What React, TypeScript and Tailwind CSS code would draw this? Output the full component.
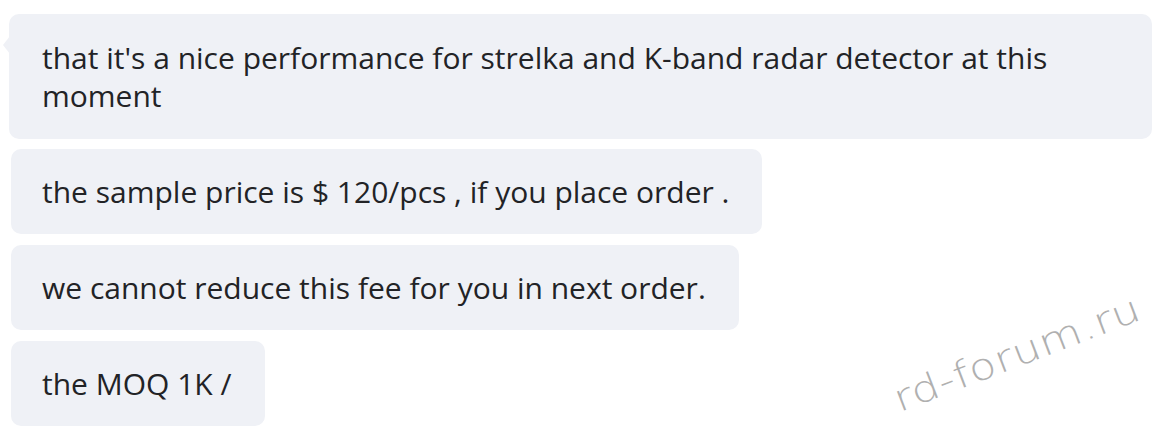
export default function App() {
  const msgs = [
    "the sample price is $ 120/pcs , if you place order .",
    "we cannot reduce this fee for you in next order.",
    "the MOQ 1K /",
  ];
  return (
    <div
      className="relative w-[1168px] h-[432px] overflow-hidden bg-white pt-[14px] pl-[11px]"
      style={{ fontFamily: '"Open Sans", "Noto Sans", sans-serif' }}
    >
      <div className="flex flex-col items-start">
        {/* first bubble with tail */}
        <div className="relative -ml-[2px] mb-[10px] flex h-[125px] w-[1143px] items-center rounded-[10px] bg-[#eff1f6] pl-[33px] pr-[30px] text-[30px] leading-[38px] text-[#222326]">
          <span className="absolute -left-[6px] top-[22px] h-0 w-0 border-y-[9px] border-r-[7px] border-y-transparent border-r-[#eff1f6]" />
          <p>that it's a nice performance for strelka and K-band radar detector at this moment</p>
        </div>
        <div className="flex flex-col items-start gap-[11px]">
          {msgs.map((m) => (
            <div
              key={m}
              className="flex h-[85px] items-center rounded-[10px] bg-[#eff1f6] pl-[31px] pr-[33px] text-[30px] leading-[38px] text-[#222326]"
            >
              {m}
            </div>
          ))}
        </div>
      </div>
      {/* watermark */}
      <div className="absolute left-[1017px] top-[354px] -translate-x-1/2 -translate-y-1/2 -rotate-[21deg] scale-x-[1.2] whitespace-nowrap text-[37px] font-extralight tracking-[0.5px] text-[#b0b0b0]"
        style={{ fontFamily: '"DejaVu Sans", sans-serif' }}
      >
        rd-forum.ru
      </div>
    </div>
  );
}
